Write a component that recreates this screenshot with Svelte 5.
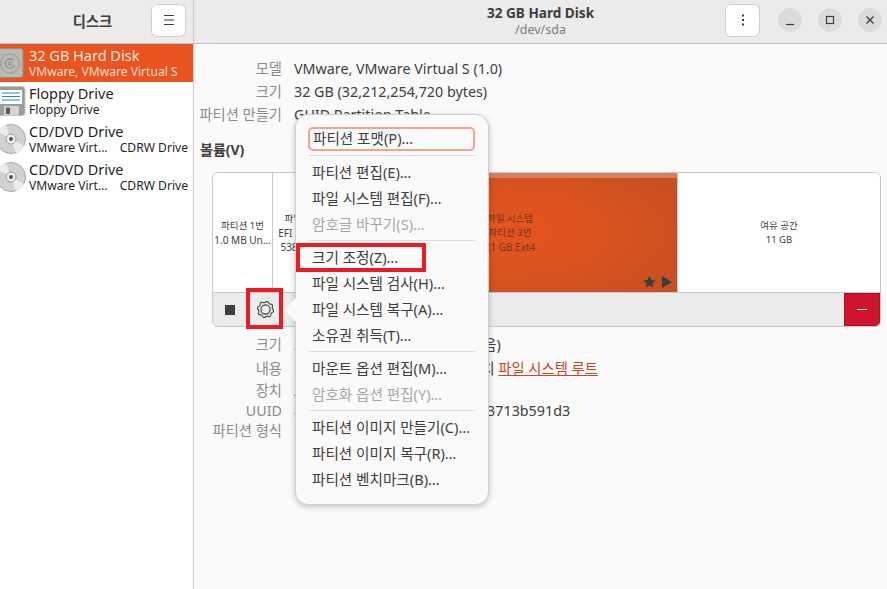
<script>
  const drives = [
    { id: 'hd', title: '32 GB Hard Disk', sub: 'VMware, VMware Virtual S', selected: true },
    { id: 'fd', title: 'Floppy Drive', sub: 'Floppy Drive' },
    { id: 'cd', title: 'CD/DVD Drive', sub: 'VMware Virt…', right: 'CDRW Drive' },
    { id: 'cd', title: 'CD/DVD Drive', sub: 'VMware Virt…', right: 'CDRW Drive' }
  ];
  const info = [
    ['모델', 'VMware, VMware Virtual S (1.0)'],
    ['크기', '32 GB (32,212,254,720 bytes)'],
    ['파티션 만들기', 'GUID Partition Table']
  ];
  const menu = [
    [{ t: '파티션 포맷(P)…', focus: true }],
    [{ t: '파티션 편집(E)…' }, { t: '파일 시스템 편집(F)…' }, { t: '암호글 바꾸기(S)…', off: true }],
    [{ t: '크기 조정(Z)…' }, { t: '파일 시스템 검사(H)…' }, { t: '파일 시스템 복구(A)…' }, { t: '소유권 취득(T)…' }],
    [{ t: '마운트 옵션 편집(M)…' }, { t: '암호화 옵션 편집(Y)…', off: true }],
    [{ t: '파티션 이미지 만들기(C)…' }, { t: '파티션 이미지 복구(R)…' }, { t: '파티션 벤치마크(B)…' }]
  ];
  const gearPoints = Array.from({ length: 32 }, (_, i) => {
    const a = (i / 32) * Math.PI * 2;
    const r = [9.6, 9.6, 8.2, 8.2][i % 4];
    return `${(10 + r * Math.cos(a + 0.1)).toFixed(2)},${(10 + r * Math.sin(a + 0.1)).toFixed(2)}`;
  }).join(' ');
</script>

<div class="window">
  <aside class="left">
    <header class="head lefthead">
      <span class="apptitle">디스크</span>
      <button class="btn burger" aria-label="메뉴">
        <svg width="16" height="16" viewBox="0 0 16 16"><path d="M3 3.5h10M3 8h10M3 12.5h10" stroke="#3d3d3d" stroke-width="1.2" fill="none"/></svg>
      </button>
    </header>
    <ul class="drives">
      {#each drives as d}
        <li class="drive" class:selected={d.selected}>
          <span class="ico">
            {#if d.id === 'hd'}
              <svg width="25" height="30" viewBox="0 0 25 30">
                <rect x="-3" y="0.5" width="26" height="29" rx="3" fill="#b9b9b6" stroke="#8f8f8c"/>
                <circle cx="10" cy="15.5" r="9.5" fill="none" stroke="#999996"/>
                <path d="M13.5 12.5a4.6 4.6 0 1 0 .8 4.5" fill="none" stroke="#8c8c8a" stroke-width="1.1"/>
                <circle cx="10" cy="15.5" r="1.6" fill="none" stroke="#8c8c8a"/>
              </svg>
            {:else if d.id === 'fd'}
              <svg width="27" height="30" viewBox="0 0 27 30">
                <rect x="-3" y="0.5" width="28" height="29" rx="3" fill="#9b9b9b" stroke="#c4c4c4"/>
                <rect x="0" y="4" width="22" height="14" fill="#fff"/>
                <path d="M2 7h18M2 10.5h18M2 14h18" stroke="#2d8ac0" stroke-width="1.2"/>
                <rect x="4" y="20" width="15" height="9" fill="#d4d4d4"/>
                <rect x="6" y="21.5" width="4" height="6.5" fill="#5c5c5c"/>
              </svg>
            {:else}
              <svg width="27" height="32" viewBox="0 0 27 32">
                <circle cx="11" cy="16" r="14.5" fill="#d2d2d2" stroke="#a9a9a9"/>
                <path d="M11 16 L-2 9 A15 15 0 0 1 6 2Z M11 16 L24 23 A15 15 0 0 1 16 30Z" fill="#ececec"/>
                <circle cx="11" cy="16" r="5" fill="#efefef" stroke="#9c9c9c"/>
                <circle cx="11" cy="16" r="2" fill="#555"/>
              </svg>
            {/if}
          </span>
          <span class="dtext">
            <span class="dtitle">{d.title}</span>
            <span class="dsub"><span>{d.sub}</span>{#if d.right}<span>{d.right}</span>{/if}</span>
          </span>
        </li>
      {/each}
    </ul>
  </aside>

  <section class="right">
    <header class="head righthead">
      <div class="titles">
        <strong>32 GB Hard Disk</strong>
        <span>/dev/sda</span>
      </div>
      <button class="btn kebab" aria-label="더 보기">
        <svg width="16" height="16" viewBox="0 0 16 16"><g fill="#3d3d3d"><rect x="7" y="2.5" width="2" height="2"/><rect x="7" y="7" width="2" height="2"/><rect x="7" y="11.5" width="2" height="2"/></g></svg>
      </button>
      <div class="wm">
        <span class="wbtn"><svg width="12" height="12" viewBox="0 0 12 12"><path d="M2 10.5h8" stroke="#3d3d3d" stroke-width="1.2"/></svg></span>
        <span class="wbtn"><svg width="12" height="12" viewBox="0 0 12 12"><rect x="2.5" y="2.5" width="7" height="7" fill="none" stroke="#3d3d3d" stroke-width="1.2"/></svg></span>
        <span class="wbtn"><svg width="12" height="12" viewBox="0 0 12 12"><path d="M2.5 2.5l7 7M9.5 2.5l-7 7" stroke="#3d3d3d" stroke-width="1.4"/></svg></span>
      </div>
    </header>

    <div class="body">
      <dl class="grid top">
        {#each info as [k, v]}
          <dt>{k}</dt><dd>{v}</dd>
        {/each}
      </dl>

      <h2>볼륨(V)</h2>

      <div class="volume">
        <div class="parts">
          <div class="part p1"><span>파티션 1번</span><span class="lat">1.0 MB Un…</span></div>
          <div class="part p2"><span>파일 시스템</span><span class="lat">EFI System…</span><span class="lat">538 MB FAT</span></div>
          <div class="part p3">
            <span>파일 시스템</span><span>파티션 3번</span><span class="lat">21 GB Ext4</span>
            <div class="marks">
              <svg width="15" height="14" viewBox="0 0 14 14"><path d="M7 .8l1.9 4.1 4.4.5-3.3 3 .9 4.4L7 10.6l-3.9 2.2.9-4.4-3.3-3 4.4-.5z" fill="#3d3d3d"/></svg>
              <svg width="12" height="14" viewBox="0 0 12 14"><path d="M1 1l10 6-10 6z" fill="#3d3d3d"/></svg>
            </div>
          </div>
          <div class="part p4"><span>여유 공간</span><span>11 GB</span></div>
        </div>
        <div class="tools">
          <button class="tool stop" aria-label="중지"><i></i></button>
          <button class="tool gear" aria-label="설정">
            <svg width="17" height="17" viewBox="0 0 20 20" fill="none" stroke="#3d3d3d">
              <polygon points={gearPoints} stroke-width="1.2" stroke-linejoin="round"/>
              <circle cx="10" cy="10" r="5.4" stroke-width="1.3"/>
            </svg>
          </button>
          <span class="spacer"></span>
          <button class="tool del" aria-label="삭제"><i></i></button>
        </div>
      </div>

      <dl class="grid bottom">
        <dt>크기</dt><dd>21 GB – 10 GB 여유 (50.0% 남음)</dd>
        <dt>내용</dt><dd>Ext4 (버전 1.0.0) – 마운트된 위치 <a href="#root">파일 시스템 루트</a></dd>
        <dt>장치</dt><dd>/dev/sda3</dd>
        <dt>UUID</dt><dd>8f2a7c14-5d3e-4a60-9c1b-e63713b591d3</dd>
        <dt>파티션 형식</dt><dd>Linux 파일 시스템</dd>
      </dl>
    </div>
  </section>

  <div class="popover">
    <span class="arrow"></span>
    {#each menu as group, i}
      {#if i > 0}<hr class:first={i === 1} />{/if}
      {#each group as item}
        <div class="item" class:off={item.off} class:focus={item.focus}>{item.t}</div>
      {/each}
    {/each}
  </div>

  <span class="mark markmenu"></span>
  <span class="mark markgear"></span>
</div>

<style>
  :global(body) { margin: 0; background: #fafafa; }
  * { box-sizing: border-box; }
  .window {
    position: relative;
    display: flex;
    width: 887px;
    height: 589px;
    overflow: hidden;
    font-family: "Noto Sans", "Noto Sans CJK KR", sans-serif;
    font-size: 14.3px;
    color: #3d3d3d;
    background: #fafafa;
  }
  .left { width: 194px; flex: none; background: #fff; border-right: 1px solid #c8c8c8; }
  .right { flex: 1; min-width: 0; }
  .head { height: 44px; background: #ebebeb; border-bottom: 1px solid #c4c4c4; display: flex; align-items: center; padding-bottom: 3px; }
  .lefthead { position: relative; padding-right: 7px; justify-content: flex-end; }
  .apptitle { position: absolute; left: 0; width: 185px; text-align: center; font-weight: 700; color: #3d3d3d; }
  .btn {
    width: 35px; height: 33px; padding: 0; background: #fff; border: 1px solid #cfcfcf; border-radius: 6px;
    display: flex; align-items: center; justify-content: center;
  }
  .drives { list-style: none; margin: 0; padding: 0; }
  .drive { height: 38px; display: flex; align-items: center; color: #1f1f1f; }
  .drive.selected { background: #e95420; color: #fff; }
  .ico { width: 29px; height: 38px; flex: none; display: flex; align-items: center; }
  .dtext { flex: 1; min-width: 0; display: flex; flex-direction: column; padding-right: 5px; line-height: 16px; gap: 1px; }
  .dtitle { font-size: 14.5px; }
  .dsub { display: flex; justify-content: space-between; font-size: 12.1px; white-space: nowrap; }
  .selected .dtitle { color: #fde9df; }
  .selected .dsub { color: #fbdccd; }
  .righthead { padding-right: 5px; position: relative; justify-content: flex-end; }
  .titles { position: absolute; left: 0; right: 0; top: 4px; display: flex; flex-direction: column; align-items: center; line-height: 17px; }
  .titles strong { font-size: 13.6px; }
  .titles span { font-size: 12.5px; color: #7c7c7c; }
  .kebab { position: relative; margin-right: 18px; }
  .wm { position: relative; display: flex; gap: 16px; }
  .wbtn { width: 24px; height: 24px; border-radius: 50%; background: #dcdcdc; display: flex; align-items: center; justify-content: center; }
  .body { padding-top: 13px; }
  .grid { margin: 0; display: grid; grid-template-columns: 88px 1fr; column-gap: 12px; white-space: nowrap; }
  .grid dt { text-align: right; color: #8b8b8b; }
  .grid dd { margin: 0; color: #3d3d3d; }
  .top { grid-auto-rows: 23px; line-height: 23px; }
  h2 { margin: 14px 0 0 6px; font-size: 14px; line-height: 20px; font-weight: 700; }
  .volume { margin: 12px 6px 0 18px; height: 155px; border: 1px solid #c8c8c8; border-radius: 6px; overflow: hidden; background: #ebebeb; }
  .parts { height: 120px; display: flex; background: #fff; border-bottom: 1px solid #c8c8c8; }
  .part { position: relative; display: flex; flex-direction: column; align-items: center; justify-content: center; font-size: 9.5px; line-height: 14px; color: #3d3d3d; white-space: nowrap; overflow: hidden; border-right: 1px solid #c8c8c8; }
  .part .lat { font-size: 10px; }
  .p1 { width: 60px; }
  .p2 { width: 70px; }
  .p3 {
    flex: 1; color: #75371c;
    background:
      linear-gradient(#d97f60, #d97f60) top / 100% 5px no-repeat,
      radial-gradient(ellipse 60% 75% at 50% 50%, #e4531f 0, #db531f 45%, #c64f22 100%);
  }
  .p4 { width: 202px; border-right: none; }
  .marks { position: absolute; right: 4px; bottom: 3px; display: flex; gap: 4px; align-items: center; }
  .tools { height: 33px; display: flex; align-items: stretch; }
  .tool { border: none; padding: 0; background: transparent; display: flex; align-items: center; justify-content: center; }
  .stop { width: 33px; }
  .stop i { width: 10px; height: 10px; background: #3d3d3d; display: block; }
  .gear { width: 38px; }
  .spacer { flex: 1; }
  .del { width: 36px; background: #d0142e; border: 1px solid #a51025; }
  .del i { width: 10px; height: 1.5px; background: #fff; display: block; }
  .bottom { margin-top: 6px; grid-template-rows: 24px 24px 20px 20px 20px; line-height: 22px; }
  .bottom dt, .bottom dd { align-self: center; }
  .bottom a { color: #c7481b; }
  .popover {
    position: absolute; left: 295px; top: 114px; width: 194px; height: 391px; padding: 12px 13px;
    background: #fafafa; border: 1px solid #cfcfcf; border-radius: 13px;
    box-shadow: 0 2px 6px rgba(0, 0, 0, .22);
  }
  .arrow {
    position: absolute; left: -12px; top: 183px; width: 0; height: 0;
    border-top: 12px solid transparent; border-bottom: 12px solid transparent; border-right: 12px solid #fafafa;
  }
  .item { height: 26px; line-height: 24px; padding-left: 3px; font-size: 14.6px; white-space: nowrap; color: #3d3d3d; }
  .item.off { color: #a8a8a8; }
  .item.focus { height: 24px; line-height: 18px; border: 2px solid #f3a48a; border-radius: 5px; padding-left: 3px; margin-left: -1px; }
  hr { border: none; border-top: 1px solid #dcdcdc; margin: 2px 0 4px; }
  hr.first { margin: 4px 0 4px; }
  .mark { position: absolute; border: 4px solid #ed1c24; pointer-events: none; }
  .markmenu { left: 296px; top: 243px; width: 130px; height: 29px; }
  .markgear { left: 246px; top: 288px; width: 37px; height: 41px; }
</style>
